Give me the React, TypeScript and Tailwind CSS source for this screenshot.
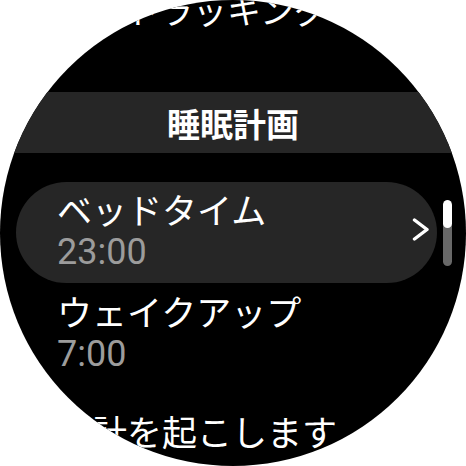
import React from 'react';

const jp = "font-['Noto_Sans_CJK_JP',sans-serif]";
const num = "font-['Roboto','Noto_Sans_CJK_JP',sans-serif]";

function Row({ label, time, chevron }: { label: string; time: string; chevron?: boolean }) {
  return (
    <div className="flex items-center justify-between">
      <div className="flex flex-col">
        <div className={`${jp} text-[35px] leading-[40px] text-white`}>{label}</div>
        <div className={`${num} mt-[5px] text-[36px] leading-[36px] text-[#9c9c9c]`}>{time}</div>
      </div>
      {chevron && (
        <svg width="17" height="23" viewBox="0 0 17 23" className="mr-[8px]">
          <polyline
            points="2.5,2 15,11.5 2.5,21"
            fill="none"
            stroke="white"
            strokeWidth="3.4"
            strokeLinecap="round"
            strokeLinejoin="round"
          />
        </svg>
      )}
    </div>
  );
}

export default function App() {
  return (
    <div className="w-[466px] h-[466px] bg-white">
      <div className="relative w-[466px] h-[466px] rounded-full overflow-hidden bg-black">
        {/* Previous section, scrolled mostly out of view */}
        <div className={`${jp} -mt-[10px] pl-[57px] text-[34px] leading-[40px] text-white whitespace-nowrap`}>
          睡眠トラッキング
        </div>

        {/* Section header */}
        <div className="mt-[62px] h-[61px] flex items-center justify-center bg-[#262626]">
          <span className={`${jp} text-[33px] font-bold leading-[40px] text-white`}>睡眠計画</span>
        </div>

        {/* Bedtime chip */}
        <div className="mt-[29px] ml-[16px] w-[421px] rounded-full bg-[#262626] pl-[41px] pt-[7px] pb-[13px]">
          <Row label="ベッドタイム" time="23:00" chevron />
        </div>

        {/* Wake up */}
        <div className="pl-[57px] pt-[8px]">
          <Row label="ウェイクアップ" time="7:00" />
        </div>

        <div className={`${jp} mt-[39px] pl-[57px] text-[35px] leading-[40px] text-white whitespace-nowrap`}>
          時計を起こします
        </div>

        {/* Scroll indicator */}
        <div className="absolute left-[443px] top-[200px] w-[9px] h-[66px] rounded-full bg-[#686868] overflow-hidden">
          <div className="h-[28px] rounded-full bg-white" />
        </div>
      </div>
    </div>
  );
}
